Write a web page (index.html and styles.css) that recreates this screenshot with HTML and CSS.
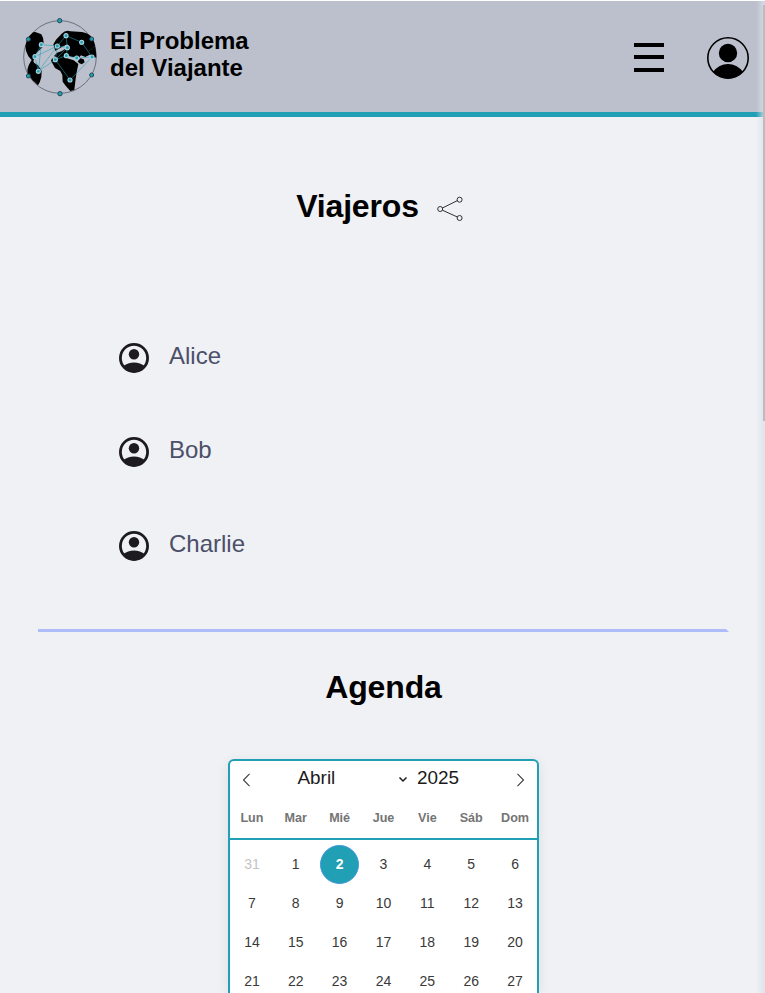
FILE: index.html
```html
<!DOCTYPE html>
<html lang="es">
<head>
<meta charset="utf-8">
<title>El Problema del Viajante</title>
<link rel="stylesheet" href="styles.css">
</head>
<body>
<svg class="sprite" aria-hidden="true">
  <symbol id="user" viewBox="0 0 30 30">
    <circle cx="15" cy="15" r="13.600" fill="none" stroke="currentColor" stroke-width="2.800"/>
    <circle cx="15" cy="11.200" r="5.200" fill="currentColor"/>
    <path d="M4 23.300C7 20.600 11 19.400 15 19.400s8 1.200 11 3.900C23.500 27 19.500 29.500 15 29.500S6.500 27 4 23.300Z" fill="currentColor"/>
  </symbol>
</svg>
<header class="header">
  <a class="brand">
    <svg class="globe" viewBox="30 51 240 240">
      <circle cx="150" cy="171" r="109" fill="none" stroke="#6c6f7c" stroke-width="3"/>
      <path d="M52 114L69 97Q75 94 82 98L94 103Q101 113 101 128L98 141 88 151 79 159 75 170 70 184 73 189 84 196 95 213 94 231Q91 246 84 256L68 241 53 222Q50 206 58 192L65 180 55 169Q46 154 46 139Z"/>
      <path d="M130 133L138 119 155 101Q167 89 181 94L216 96Q240 100 249 117 258 137 259 172L248 174 239 164 226 171 213 166 203 178 194 171 185 171 170 164 159 171 142 174 132 168 141 158 156 153 166 146 178 141 172 133 160 139 146 146 136 153Z"/>
      <path d="M123 182Q126 171 142 171L158 168 176 176 191 181 205 192 200 217 197 236 193 270 181 273 168 259 158 245 157 225 151 213 135 204Z"/>
      <path d="M203 184L211 175 221 178 224 187 215 193 207 189Z"/>
      <path d="M235 154L256 137" fill="none" stroke="#333" stroke-width="2"/>
      <path class="route" d="M94 134L75 170 85 214 94 134M94 134L142 138 75 170M85 214L142 138 168 107 215 127 246 171 180 240 136 179 142 138 172 143 168 107M136 179L172 143 169 167 136 179M169 167L200 174 246 171M85 214L136 179"/>
      <g class="stop">
        <circle cx="94" cy="134" r="6"/><circle cx="75" cy="170" r="6"/><circle cx="85" cy="214" r="6"/><circle cx="142" cy="138" r="6"/><circle cx="168" cy="107" r="6"/><circle cx="215" cy="127" r="6"/><circle cx="172" cy="143" r="6"/><circle cx="169" cy="167" r="6"/><circle cx="136" cy="179" r="6"/><circle cx="200" cy="174" r="6"/><circle cx="246" cy="171" r="6"/><circle cx="180" cy="240" r="6"/>
      </g>
      <g class="orbit">
        <circle cx="149" cy="62" r="6.500"/><circle cx="55" cy="118" r="6"/><circle cx="55" cy="228" r="6"/><circle cx="150" cy="281" r="6.500"/><circle cx="245" cy="117" r="6"/><circle cx="245" cy="225" r="6"/>
      </g>
    </svg>
    <span class="brand-name">El Problema<br>del Viajante</span>
  </a>
  <nav class="tools">
    <svg class="menu" viewBox="0 0 30 30"><path d="M0 0h30v4H0zM0 12h30v4H0zM0 25h30v4H0z"/></svg>
    <svg class="account" viewBox="0 0 42 42">
      <circle cx="21" cy="21" r="20.200" fill="none" stroke="#000" stroke-width="1.600"/>
      <circle cx="21" cy="16" r="9.200"/>
      <path d="M6 35Q12 27 21 27T36 35Q30 41.500 21 41.500T6 35Z"/>
    </svg>
  </nav>
</header>
<main>
  <section class="travelers">
    <div class="heading">
      <h1>Viajeros</h1>
      <svg class="share" viewBox="0 0 27 26"><path d="M5.400 12L20.400 4.600M5.400 14.200L20.400 21"/><circle cx="3.200" cy="13" r="2.500"/><circle cx="22.600" cy="3.700" r="2.500"/><circle cx="22.600" cy="22" r="2.500"/></svg>
    </div>
    <ul class="people">
      <li><svg><use href="#user"/></svg><span>Alice</span></li>
      <li><svg><use href="#user"/></svg><span>Bob</span></li>
      <li><svg><use href="#user"/></svg><span>Charlie</span></li>
    </ul>
  </section>
  <section class="agenda">
    <h1>Agenda</h1>
    <div class="calendar">
      <div class="month">
        <svg class="arrow" viewBox="0 0 14 14"><path d="M9.500 .8L3.500 7l6 6.200"/></svg>
        <span class="month-name">Abril</span>
        <svg class="chevron" viewBox="0 0 10 8"><path d="M1.500 2.500L5 6 8.500 2.500"/></svg>
        <span class="year">2025</span>
        <svg class="arrow next" viewBox="0 0 14 14"><path d="M4.500 .8l6 6.200-6 6.200"/></svg>
      </div>
      <div class="weekdays"><span>Lun</span><span>Mar</span><span>Mié</span><span>Jue</span><span>Vie</span><span>Sáb</span><span>Dom</span></div>
      <div class="days">
        <span class="outside">31</span><span>1</span><span class="selected">2</span><span>3</span><span>4</span><span>5</span><span>6</span>
        <span>7</span><span>8</span><span>9</span><span>10</span><span>11</span><span>12</span><span>13</span>
        <span>14</span><span>15</span><span>16</span><span>17</span><span>18</span><span>19</span><span>20</span>
        <span>21</span><span>22</span><span>23</span><span>24</span><span>25</span><span>26</span><span>27</span>
      </div>
    </div>
  </section>
</main>
<div class="scroll-track"><div class="scroll-thumb"></div></div>
</body>
</html>
```
FILE: styles.css
```css
* { box-sizing: border-box; }
body {
  margin: 0;
  height: 993px;
  overflow: hidden;
  border-top: 1px solid #fff;
  background: #eff1f5;
  color: #000;
  font-family: "Liberation Sans", Arial, sans-serif;
}
svg { display: block; flex: none; }
.sprite { position: absolute; width: 0; height: 0; }
h1 { margin: 0; font-size: 32px; line-height: 37px; letter-spacing: -.15px; }

.header {
  display: flex;
  justify-content: space-between;
  height: 116px;
  padding: 0 16px 0 20px;
  border-bottom: 5px solid #209fb5;
  background: #bcc0cc;
}
.brand { display: flex; gap: 10px; padding-top: 16px; }
.globe { width: 80px; height: 80px; }
.route { fill: none; stroke: #209fb5; stroke-width: 2; opacity: .85; }
.stop { fill: #209fb5; stroke: #a6d3dc; stroke-width: 3.5; }
.orbit { fill: #209fb5; stroke: #244b55; stroke-width: 3; }
.brand-name { padding-top: 10px; font-size: 24px; font-weight: 700; line-height: 27px; }
.tools { display: flex; gap: 43px; padding-top: 36px; }
.menu { width: 30px; height: 30px; margin-top: 6px; }
.account { width: 42px; height: 42px; }

.heading { display: flex; justify-content: center; gap: 18px; padding-top: 71px; padding-right: 5px; }
.share { width: 27px; height: 26px; margin-top: 8px; fill: none; stroke: #303036; stroke-width: 1; }
.people { margin: 101px 0 0; padding: 0 0 0 119px; list-style: none; }
.people li { display: flex; gap: 20px; height: 94px; padding-top: 15px; font-size: 24px; line-height: 28px; color: #4c4f69; }
.people svg { width: 30px; height: 30px; margin-top: 2px; color: #1d1b20; }
.people span { padding-top: 1px; }
.travelers { position: relative; height: 515px; }
.travelers::after {
  content: "";
  position: absolute;
  left: 38px;
  bottom: 0;
  width: 691px;
  height: 3px;
  background: #aebcfa;
  clip-path: polygon(0 0, 688px 0, 100% 100%, 0 100%);
}

.agenda { padding: 37px 0 0; }
.agenda h1 { padding-left: 2px; text-align: center; }
.calendar {
  width: 311px;
  height: 234px;
  margin: 53px 0 0 228px;
  border: 2px solid #209fb5;
  border-bottom: 0;
  border-radius: 6px 6px 0 0;
  background: #fff;
  box-shadow: 0 3px 13px rgba(0, 0, 0, .08);
}
.month { display: flex; height: 42px; font-size: 18.9px; line-height: 22px; padding-top: 6px; }
.arrow { width: 14px; height: 14px; margin: 6px 0 0 10px; fill: none; stroke: #3c3c3c; stroke-width: 1.1; }
.month-name { width: 101px; margin-left: 43.500px; color: #1b1b1b; }
.chevron { width: 10px; height: 8px; margin: 8px 0 0 -.5px; fill: none; stroke: #1b1b1b; stroke-width: 1.5; }
.year { width: 43px; margin-left: 9px; color: #1b1b1b; }
.arrow.next { margin-left: 53px; }
.weekdays {
  display: grid;
  grid-template-columns: repeat(7, 1fr);
  height: 37px;
  border-bottom: 2px solid #209fb5;
  color: #757575;
  font-size: 12.6px;
  font-weight: 700;
  line-height: 31px;
  text-align: center;
}
.days {
  display: grid;
  grid-template-columns: repeat(7, 1fr);
  grid-auto-rows: 39px;
  justify-items: center;
  padding-top: 5px;
  color: #393939;
  font-size: 14px;
  line-height: 39px;
}
.days span { width: 39px; height: 39px; text-align: center; }
.days .outside { color: #c4c4c4; }
.days .selected { border: 1px solid #3f96dc; border-radius: 50%; background: #209fb5; color: #fff; font-weight: 700; line-height: 37px; }

.scroll-track {
  position: absolute;
  top: 1px;
  right: 0;
  width: 9px;
  height: 992px;
  background: linear-gradient(to right, rgba(220, 224, 232, 0), rgba(220, 224, 235, .7) 80%);
}
.scroll-thumb { width: 2px; height: 416px; margin: 4px 0 0 7px; background: #bcbcbc; }
```
